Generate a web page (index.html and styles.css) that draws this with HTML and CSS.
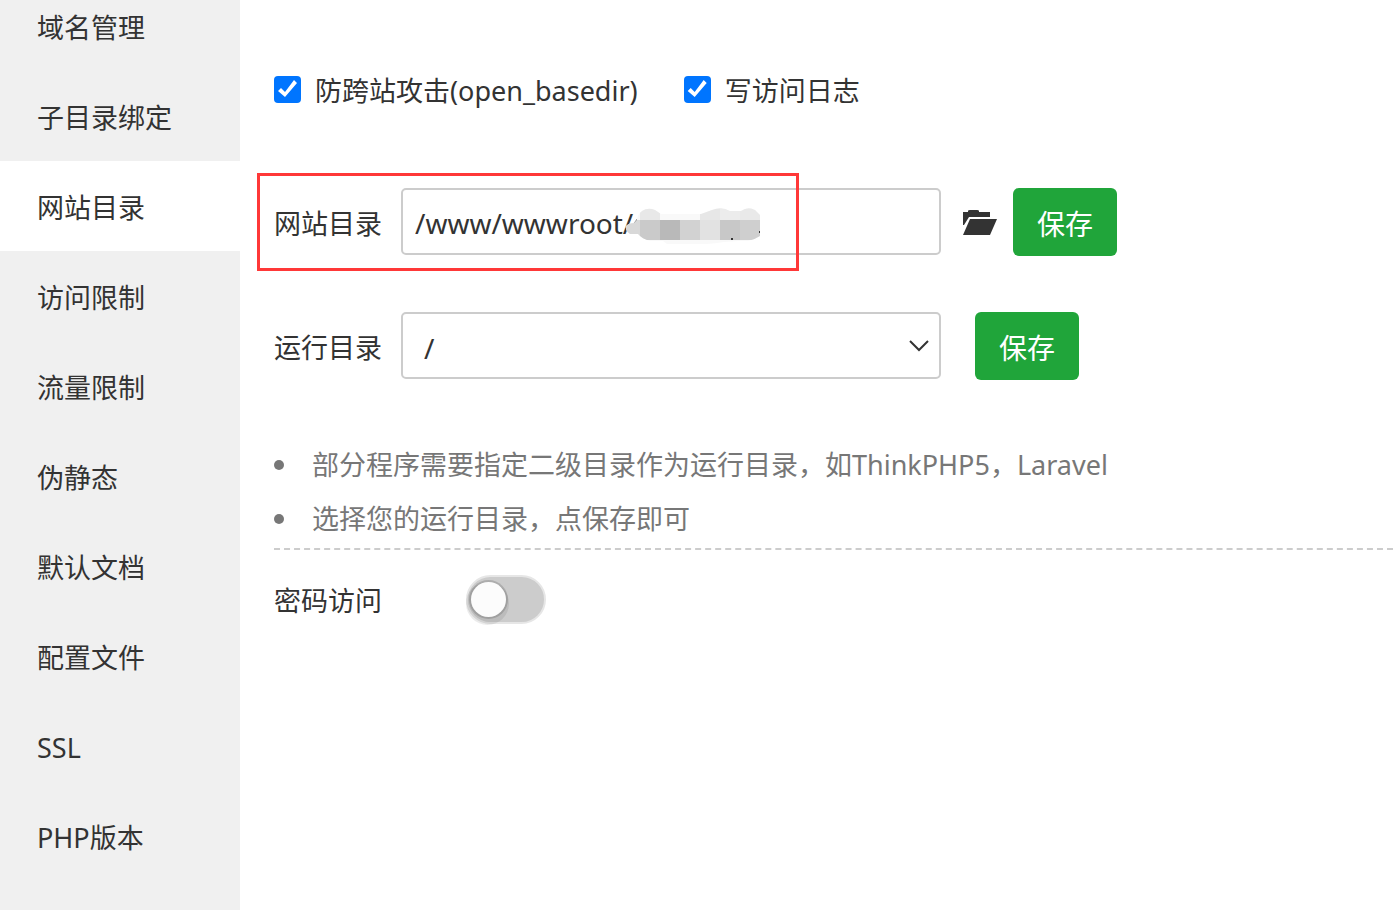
FILE: index.html
```html
<!DOCTYPE html>
<html lang="zh-CN">
<head>
    <meta charset="UTF-8">
    <meta name="viewport" content="width=device-width, initial-scale=1.0">
    <title>网站目录</title>
    <link rel="stylesheet" href="styles.css">
</head>
<body>
    <div class="container">
        <nav class="sidebar">
            <a class="menu-item" href="#">域名管理</a>
            <a class="menu-item" href="#">子目录绑定</a>
            <a class="menu-item active" href="#">网站目录</a>
            <a class="menu-item" href="#">访问限制</a>
            <a class="menu-item" href="#">流量限制</a>
            <a class="menu-item" href="#">伪静态</a>
            <a class="menu-item" href="#">默认文档</a>
            <a class="menu-item" href="#">配置文件</a>
            <a class="menu-item" href="#">SSL</a>
            <a class="menu-item" href="#">PHP版本</a>
        </nav>

        <main class="content">
            <div class="checks">
                <label class="check"><input type="checkbox" checked>防跨站攻击(open_basedir)</label>
                <label class="check"><input type="checkbox" checked>写访问日志</label>
            </div>

            <div class="row highlighted">
                <label class="row-label" for="site-path">网站目录</label>
                <div class="field-wrap">
                    <input type="text" class="field" id="site-path" value="/www/wwwroot/">
                    <!-- Masked part of the path -->
                    <svg class="mask" width="140" height="38" viewBox="0 0 140 38" aria-hidden="true">
                        <defs>
                            <clipPath id="mask-shape">
                                <path d="M2 20 Q5 17 10 17L13 14 Q13 9 18 5 Q24 1 31 4 L37 8 H77 L88 4 Q98 0 106 5 H117 Q124 0 131 4 L136 9 V30 Q130 34 124 35 H115 L100 36 Q75 40 43 38 L39 35 H26 Q18 33 14 28 H6 Q1 25 2 20 Z"/>
                            </clipPath>
                        </defs>
                        <path d="M9 18L13 13V18Z" fill="#333"/>
                        <g clip-path="url(#mask-shape)" shape-rendering="crispEdges">
                            <rect width="140" height="38" fill="#f9f9f9"/>
                            <rect x="0" y="14" width="16" height="20" fill="#d8d8d8"/>
                            <rect x="16" y="0" width="20" height="14" fill="#e8e8e8"/>
                            <rect x="76" y="0" width="20" height="14" fill="#e7e7e7"/>
                            <rect x="96" y="0" width="20" height="14" fill="#ececec"/>
                            <rect x="116" y="0" width="22" height="14" fill="#e9e9e9"/>
                            <rect x="16" y="14" width="20" height="20" fill="#cacaca"/>
                            <rect x="36" y="14" width="20" height="20" fill="#b9b9b9"/>
                            <rect x="56" y="14" width="20" height="20" fill="#d2d2d2"/>
                            <rect x="76" y="14" width="20" height="20" fill="#e2e2e2"/>
                            <rect x="96" y="14" width="20" height="20" fill="#c8c8c8"/>
                            <rect x="116" y="14" width="22" height="20" fill="#cfcfcf"/>
                        </g>
                        <path d="M107 32h2v2h-2zM135 25h1v2h-1z" fill="#333"/>
                    </svg>
                </div>
                <button type="button" class="folder-btn" aria-label="选择目录">
                    <svg width="34" height="26" viewBox="0 0 34 26" aria-hidden="true">
                        <path d="M0 15V2H5V1Q5 0 7 0H14Q16 0 16 1V2H27V7H6L1 15Z" fill="#333"/>
                        <path d="M7 9H34L27 25H0Z" fill="#333"/>
                    </svg>
                </button>
                <button type="button" class="save-btn">保存</button>
            </div>

            <div class="row">
                <label class="row-label" for="run-path">运行目录</label>
                <div class="field-wrap">
                    <select class="field" id="run-path">
                        <option>/</option>
                    </select>
                    <svg class="arrow" width="20" height="12" viewBox="0 0 20 12" aria-hidden="true">
                        <path d="M1 1L10 10L19 1" fill="none" stroke="#333" stroke-width="2"/>
                    </svg>
                </div>
                <button type="button" class="save-btn run-save">保存</button>
            </div>

            <ul class="tips">
                <li>部分程序需要指定二级目录作为运行目录，如ThinkPHP5，Laravel</li>
                <li>选择您的运行目录，点保存即可</li>
            </ul>

            <div class="password">
                <label for="password-access">密码访问</label>
                <input type="checkbox" class="switch" id="password-access">
            </div>
        </main>
    </div>
</body>
</html>
```
FILE: styles.css
```css
*,
*::before {
    box-sizing: border-box;
    margin: 0;
    padding: 0;
}

body {
    background-color: #fff;
    color: #333;
    font-family: 'Noto Sans', 'Noto Sans CJK SC', sans-serif;
    font-size: 27px;
    line-height: 54px;
}

input,
select,
button {
    font: inherit;
    color: inherit;
}

.container {
    display: flex;
    height: 100vh;
    overflow: hidden;
}

/* the menu is scrolled a little, its first item is cut off */
.sidebar {
    flex: 0 0 240px;
    margin-top: -19px;
    background-color: #f0f0f0;
}

.menu-item {
    display: block;
    padding: 4px 37px 0;
    line-height: 86px;
    color: #333;
    text-decoration: none;
}

.menu-item.active {
    background-color: #fff;
}

.content {
    flex: 1;
    padding: 64px 4px 0 34px;
}

.checks {
    display: flex;
    gap: 46px;
    margin-bottom: 70px;
}

.check {
    display: flex;
    gap: 14px;
}

.check input {
    appearance: none;
    width: 27px;
    height: 27px;
    margin-top: 12px;
    border-radius: 4px;
    border: 2px solid #777;
}

.check input:checked {
    border: none;
    background-color: #0075ff;
}

.check input:checked::before {
    content: '';
    display: block;
    height: 27px;
    background-color: #fff;
    clip-path: polygon(4px 15px, 7px 12px, 11px 16px, 20px 4px, 23px 7px, 11px 21px);
}

.row {
    display: flex;
    position: relative;
    height: 68px;
    margin-bottom: 56px;
}

.row-label {
    width: 127px;
    padding-top: 9px;
}

.highlighted::before {
    content: '';
    position: absolute;
    left: -17px;
    top: -15px;
    width: 542px;
    height: 98px;
    border: 3px solid #ff3838;
    pointer-events: none;
    z-index: 1;
}

.field-wrap {
    position: relative;
    width: 540px;
}

.field {
    display: block;
    width: 100%;
    height: 67px;
    padding: 2px 12px 0;
    border: 2px solid #ccc;
    border-radius: 5px;
    background-color: #fff;
    font-size: 28px;
    outline: none;
}

select.field {
    appearance: none;
    padding: 4px 21px 0;
}

.mask {
    position: absolute;
    left: 223px;
    top: 18px;
}

.arrow {
    position: absolute;
    right: 12px;
    top: 28px;
    pointer-events: none;
}

.folder-btn {
    display: flex;
    align-items: center;
    margin: 0 16px 0 22px;
    padding-top: 2px;
    border: none;
    background: none;
    cursor: pointer;
}

.save-btn {
    height: 68px;
    padding: 3px 24px 0;
    border: none;
    border-radius: 6px;
    background-color: #20a53a;
    color: #fff;
    font-size: 28px;
    cursor: pointer;
}

.run-save {
    margin-left: 34px;
}

.tips {
    margin-top: 58px;
    padding-bottom: 2px;
    border-bottom: 2px dashed #ccc;
    color: #777;
    list-style: none;
}

.tips li {
    display: flex;
    align-items: center;
    gap: 28px;
}

.tips li::before {
    content: '';
    width: 10px;
    height: 10px;
    border-radius: 50%;
    background-color: #777;
}

.password {
    display: flex;
    align-items: center;
    gap: 84px;
    margin-top: 21px;
}

.password label {
    padding-top: 3px;
}

.switch {
    appearance: none;
    display: flex;
    align-items: center;
    width: 80px;
    height: 49px;
    padding: 0 3px;
    border: 2px solid #e6e6e6;
    border-radius: 25px;
    background-color: #ccc;
    cursor: pointer;
}

.switch::before {
    content: '';
    width: 35px;
    height: 35px;
    border-radius: 50%;
    background-color: #fcfcfc;
    box-shadow: 0 0 0 2px rgba(0,0,0,0.15), -1px 4px 0 4px rgba(0,0,0,0.08);
}

.switch:checked {
    background-color: #20a53a;
}

.switch:checked::before {
    margin-left: auto;
}
```
